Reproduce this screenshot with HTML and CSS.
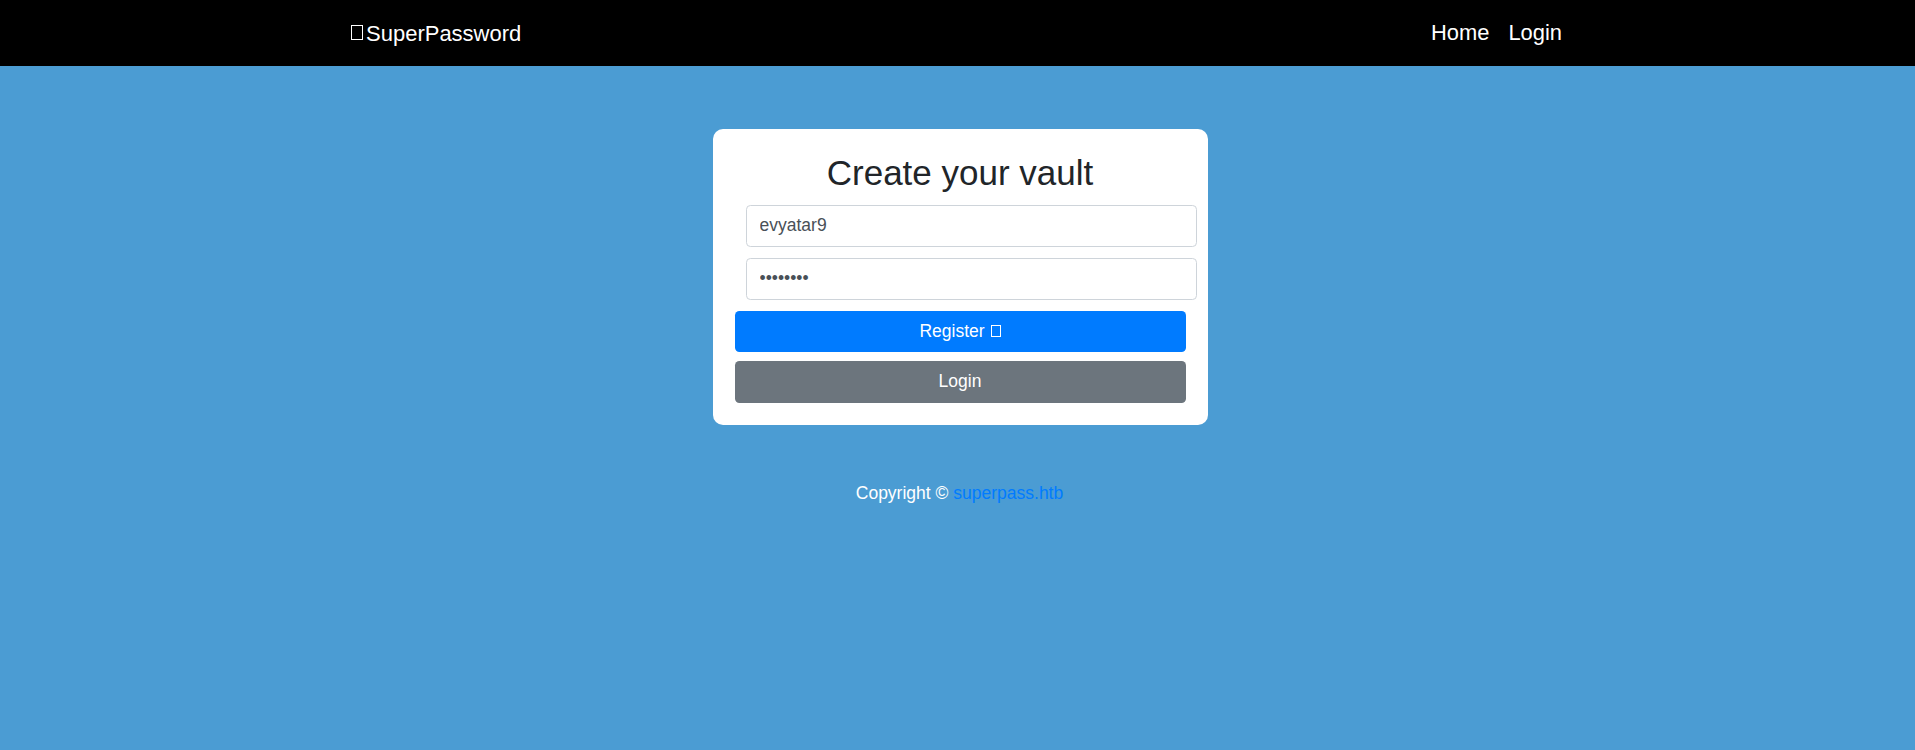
FILE: index.html
```html
<!DOCTYPE html>
<html lang="en">
<head>
<meta charset="utf-8">
<title>SuperPassword</title>
<link rel="stylesheet" href="styles.css">
</head>
<body>
<nav class="navbar">
  <div class="nav-inner">
    <a class="brand" href="#"><span class="tofu tofu-lg"></span>SuperPassword</a>
    <div class="nav-links">
      <a class="nav-link" href="#">Home</a>
      <a class="nav-link" href="#">Login</a>
    </div>
  </div>
</nav>
<main class="main">
  <div class="card">
    <h1 class="title">Create your vault</h1>
    <form class="form">
      <input class="field" type="text" value="evyatar9">
      <input class="field" type="password" value="password">
      <button class="btn btn-primary" type="button">Register <span class="tofu tofu-sm"></span></button>
      <button class="btn btn-secondary" type="button">Login</button>
    </form>
  </div>
</main>
<footer class="footer">Copyright © <a class="link" href="#">superpass.htb</a></footer>
</body>
</html>
```

FILE: styles.css
```css
* { box-sizing: border-box; }
html, body { margin: 0; padding: 0; }
body {
  background: #4b9cd3;
  font-family: "Liberation Sans", Arial, sans-serif;
  font-size: 17.5px;
  line-height: 1.5;
  color: #212529;
  min-height: 750px;
}
.navbar {
  background: #000;
  height: 66px;
}
.nav-inner {
  width: 1247px;
  margin: 0 auto;
  padding: 0 16px 0 17px;
  height: 100%;
  display: flex;
  align-items: center;
  justify-content: space-between;
}
.brand {
  color: #fff;
  text-decoration: none;
  font-size: 22px;
  display: flex;
  align-items: center;
  line-height: 1.5;
}
.nav-links {
  display: flex;
  gap: 19px;
  margin-right: 3px;
}
.nav-link {
  color: #fff;
  text-decoration: none;
  font-size: 21.9px;
  line-height: 1.5;
}
.tofu {
  display: inline-block;
  border: 1px solid #fff;
  vertical-align: middle;
}
.tofu-lg {
  width: 12px;
  height: 15px;
  margin-right: 3px;
  margin-top: -1px;
}
.tofu-sm {
  width: 10px;
  height: 12px;
  margin-left: 1px;
  margin-top: -3px;
}
.main {
  display: flex;
  justify-content: center;
  padding: 63px 0 0 5px;
}
.card {
  width: 495px;
  background: #fff;
  border-radius: 10px;
  padding: 22.5px 22px 22px;
}
.title {
  margin: 0 0 11px;
  font-size: 35px;
  font-weight: 400;
  line-height: 1.2;
  text-align: center;
  color: #212529;
}
.form {
  display: flex;
  flex-direction: column;
}
.field {
  width: 100%;
  margin: 0 0 11px 11px;
  height: 42px;
  padding: 0 13px;
  border: 1px solid #ced4da;
  border-radius: 4.4px;
  font-family: "Liberation Sans", Arial, sans-serif;
  font-size: 17.5px;
  color: #495057;
  background: #fff;
  outline: none;
}
.btn {
  width: 100%;
  height: 41px;
  border: none;
  border-radius: 4.4px;
  color: #fff;
  font-family: "Liberation Sans", Arial, sans-serif;
  font-size: 17.5px;
  line-height: 1.5;
  cursor: pointer;
  padding: 0;
}
.btn-primary {
  background: #007bff;
  margin-bottom: 9px;
}
.btn-secondary {
  background: #6c757d;
  height: 42px;
}
.footer {
  margin-top: 55px;
  text-align: center;
  color: #fff;
  padding-left: 4px;
}
.link {
  color: #007bff;
  text-decoration: none;
}
```
